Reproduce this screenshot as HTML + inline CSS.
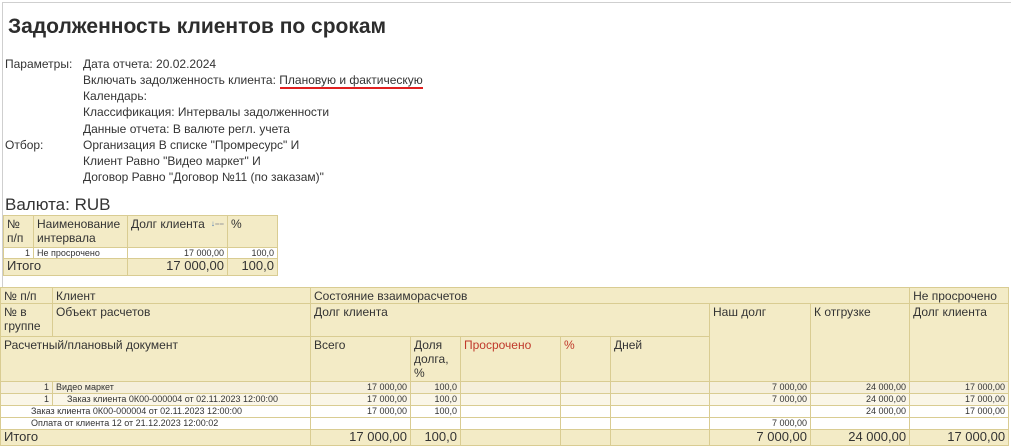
<!DOCTYPE html>
<html><head><meta charset="utf-8"><style>
*{margin:0;padding:0;box-sizing:border-box}
body{width:1011px;height:446px;background:#fff;font-family:"Liberation Sans",Arial,sans-serif;color:#333;position:relative;overflow:hidden}
.a{position:absolute;white-space:nowrap}
.p{font-size:12px;line-height:14px}
table{position:absolute;border-collapse:collapse;table-layout:fixed}
td{border:1px solid #d9cc92;padding:0 3px;vertical-align:top;overflow:hidden;white-space:nowrap}
.h td,td.h{background:#f3ebc6;font-size:12px;line-height:14px;padding-top:1px}
.r{text-align:right}
.d td{font-size:9px;line-height:10px}
.l1 td{background:#f5efdb}
.l2 td{background:#faf6e8}
.w td{background:#fff}
.t td{background:#f3ebc6;font-size:13px;line-height:14px}
.red{color:#c0392b}
</style></head><body>
<div class="a" style="left:2px;top:2px;width:1009px;height:444px;border-left:1px solid #cfcfcf;border-top:1px solid #cfcfcf"></div>
<div class="a" style="left:8px;top:15px;font-size:21px;font-weight:bold;color:#2d2d2d">Задолженность клиентов по срокам</div>
<div class="a p" style="left:5px;top:57px">Параметры:</div>
<div class="a p" style="left:83px;top:57px">Дата отчета: 20.02.2024</div>
<div class="a p" style="left:83px;top:73px">Включать задолженность клиента: Плановую и фактическую</div>
<div class="a" style="left:280px;top:87px;width:143px;height:2px;background:#e02020"></div>
<div class="a p" style="left:83px;top:89px">Календарь:</div>
<div class="a p" style="left:83px;top:105px">Классификация: Интервалы задолженности</div>
<div class="a p" style="left:83px;top:122px">Данные отчета: В валюте регл. учета</div>
<div class="a p" style="left:5px;top:138px">Отбор:</div>
<div class="a p" style="left:83px;top:138px">Организация В списке "Промресурс" И</div>
<div class="a p" style="left:83px;top:154px">Клиент Равно "Видео маркет" И</div>
<div class="a p" style="left:83px;top:170px">Договор Равно "Договор №11 (по заказам)"</div>
<div class="a" style="left:5px;top:195px;font-size:17px">Валюта: RUB</div>

<table style="left:3px;top:215px;width:274px">
<colgroup><col style="width:30px"><col style="width:94px"><col style="width:100px"><col style="width:50px"></colgroup>
<tr class="h" style="height:32px"><td>№<br>п/п</td><td>Наименование<br>интервала</td><td>Долг клиента <span style="float:right;font-size:8px;color:#4a7ab5">↓<span style="color:#999">⩵</span></span></td><td>%</td></tr>
<tr class="d w" style="height:11px"><td class="r">1</td><td>Не просрочено</td><td class="r">17 000,00</td><td class="r">100,0</td></tr>
<tr class="t" style="height:17px"><td colspan="2">Итого</td><td class="r">17 000,00</td><td class="r">100,0</td></tr>
</table>

<table style="left:0px;top:287px;width:1008px">
<colgroup><col style="width:52px"><col style="width:258px"><col style="width:100px"><col style="width:50px"><col style="width:100px"><col style="width:50px"><col style="width:99px"><col style="width:101px"><col style="width:99px"><col style="width:99px"></colgroup>
<tr class="h" style="height:15px"><td>№ п/п</td><td>Клиент</td><td colspan="7">Состояние взаиморасчетов</td><td>Не просрочено</td></tr>
<tr class="h" style="height:33px"><td>№ в<br>группе</td><td>Объект расчетов</td><td colspan="5">Долг клиента</td><td rowspan="2">Наш долг</td><td rowspan="2">К отгрузке</td><td rowspan="2">Долг клиента</td></tr>
<tr class="h" style="height:45px"><td colspan="2">Расчетный/плановый документ</td><td>Всего</td><td>Доля<br>долга,<br>%</td><td class="red">Просрочено</td><td class="red">%</td><td>Дней</td></tr>
<tr class="d l1" style="height:12px"><td class="r">1</td><td>Видео маркет</td><td class="r">17 000,00</td><td class="r">100,0</td><td></td><td></td><td></td><td class="r">7 000,00</td><td class="r">24 000,00</td><td class="r">17 000,00</td></tr>
<tr class="d l2" style="height:12px"><td class="r">1</td><td style="padding-left:14px">Заказ клиента 0К00-000004 от 02.11.2023 12:00:00</td><td class="r">17 000,00</td><td class="r">100,0</td><td></td><td></td><td></td><td class="r">7 000,00</td><td class="r">24 000,00</td><td class="r">17 000,00</td></tr>
<tr class="d w" style="height:12px"><td colspan="2" style="padding-left:30px">Заказ клиента 0К00-000004 от 02.11.2023 12:00:00</td><td class="r">17 000,00</td><td class="r">100,0</td><td></td><td></td><td></td><td></td><td class="r">24 000,00</td><td class="r">17 000,00</td></tr>
<tr class="d w" style="height:12px"><td colspan="2" style="padding-left:30px">Оплата от клиента 12 от 21.12.2023 12:00:02</td><td></td><td></td><td></td><td></td><td></td><td class="r">7 000,00</td><td></td><td></td></tr>
<tr class="t" style="height:16px"><td colspan="2">Итого</td><td class="r">17 000,00</td><td class="r">100,0</td><td></td><td></td><td></td><td class="r">7 000,00</td><td class="r">24 000,00</td><td class="r">17 000,00</td></tr>
</table>
</body></html>
